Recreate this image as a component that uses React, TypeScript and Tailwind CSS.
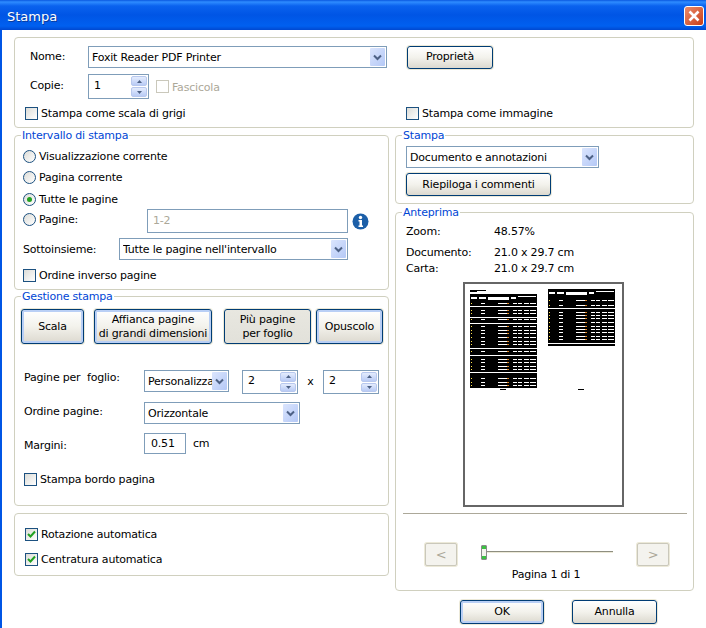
import React from "react";

const FONT = "font-['DejaVu_Sans',sans-serif] text-[11px] leading-[16px] tracking-[-0.2px] text-black";

const Group: React.FC<{ label?: string; className: string; children: React.ReactNode }> = ({ label, className, children }) => (
  <div className={`relative rounded-[4px] border border-[#d0d0bf] ${className}`}>
    {label && (
      <span className="absolute -top-[7px] left-[6px] bg-white px-[1px] leading-[14px] text-[#0046d5]">{label}</span>
    )}
    {children}
  </div>
);

const Check: React.FC<{ label: string; checked?: boolean; disabled?: boolean; className?: string }> = ({ label, checked, disabled, className }) => (
  <div className={`flex items-center ${className ?? ""}`}>
    <div
      className={`flex h-[13px] w-[13px] items-center justify-center border ${
        disabled ? "border-[#cac8bb] bg-white" : "border-[#1c5180] bg-gradient-to-br from-[#dcdcd7] to-white"
      }`}
    >
      {checked && (
        <svg width="9" height="9" viewBox="0 0 9 9">
          <path d="M1 4 L3.5 6.5 L8 1.5" fill="none" stroke="#21a121" strokeWidth="2" />
        </svg>
      )}
    </div>
    <span className={`ml-[3px] translate-y-[1px] whitespace-pre ${disabled ? "text-[#aca899]" : ""}`}>{label}</span>
  </div>
);

const Radio: React.FC<{ label: string; checked?: boolean; className?: string }> = ({ label, checked, className }) => (
  <div className={`flex items-center ${className ?? ""}`}>
    <div className="flex h-[13px] w-[13px] items-center justify-center rounded-full border border-[#1c5180] bg-gradient-to-br from-[#dcdcd7] to-white">
      {checked && <div className="h-[5px] w-[5px] rounded-full bg-[#21a121]" />}
    </div>
    <span className="ml-[3px] translate-y-[1px] whitespace-pre">{label}</span>
  </div>
);

const Select: React.FC<{ value: string; className: string }> = ({ value, className }) => (
  <div className={`flex items-center border border-[#7f9db9] bg-white pl-[3px] pr-[1px] ${className}`}>
    <span className="flex-1 translate-y-[1px] overflow-hidden whitespace-pre">{value}</span>
    <div className="flex h-[calc(100%-2px)] w-[15px] shrink-0 items-center justify-center rounded-[1px] bg-gradient-to-br from-[#dbe5fd] to-[#b4c8f6]">
      <svg width="9" height="7" viewBox="0 0 9 7">
        <path d="M1 1.5 L4.5 5 L8 1.5" fill="none" stroke="#4d6185" strokeWidth="2" />
      </svg>
    </div>
  </div>
);

const Spin: React.FC<{ value: string; className: string }> = ({ value, className }) => (
  <div className={`flex items-center border border-[#7f9db9] bg-white pl-[5px] pr-[1px] ${className}`}>
    <span className="flex-1 -translate-y-[1px]">{value}</span>
    <div className="flex h-full w-[16px] shrink-0 flex-col justify-center gap-[1px] py-[1px]">
      {[0, 1].map((i) => (
        <div key={i} className="flex flex-1 items-center justify-center rounded-[2px] border border-[#b8c8ee] bg-gradient-to-b from-[#e4ecfd] to-[#b9cbf5]">
          <svg width="5" height="3" viewBox="0 0 5 3">
            <path d={i === 0 ? "M2.5 0 L5 3 L0 3 Z" : "M0 0 L5 0 L2.5 3 Z"} fill="#4d6185" />
          </svg>
        </div>
      ))}
    </div>
  </div>
);

const Button: React.FC<{ className: string; pressed?: boolean; focused?: boolean; children: React.ReactNode }> = ({ className, pressed, focused, children }) => (
  <div
    className={`flex items-center justify-center rounded-[3px] border border-[#003c74] text-center leading-[14px] ${
      pressed ? "bg-gradient-to-b from-[#e8e7e0] to-[#e2e1da]" : "bg-gradient-to-b from-white via-[#f3f2ec] to-[#dcd9cf]"
    } ${focused ? "shadow-[inset_0_0_0_2px_#b9cff5,0_0_0_1px_#ece9d8]" : "shadow-[0_0_0_1px_#ece9d8]"} ${className}`}
  >
    {children}
  </div>
);

// tiny page thumbnail: a black table with white dashes per row
const Table: React.FC<{ x: number; y: number; h: number; rows: number[]; full: number[] }> = ({ x, y, h, rows, full }) => (
  <g transform={`translate(${x} ${y})`} shapeRendering="crispEdges">
    <rect width="67" height={h} fill="#000" />
    <rect x="1" y="3" width="6" height="2" fill="#fff" />
    <rect x="9" y="3" width="7" height="2" fill="#fff" />
    <rect x="18" y="3" width="21" height="3" fill="#fff" />
    <rect x="41" y="3" width="5" height="2" fill="#fff" />
    <rect x="48" y="2" width="18" height="1" fill="#fff" />
    {rows.map((r) => (
      <g key={r}>
        <rect x="1" y={r} width="1" height="1" fill="#ffe14a" />
        <rect x="11" y={r} width="4" height="1" fill="#fff" />
        <rect x="28" y={r} width="9" height="1" fill="#fff" />
        <rect x="37" y={r} width="2" height="1" fill="#e08a2a" />
        <rect x="43" y={r} width="4" height="1" fill="#fff" />
        <rect x="48" y={r} width="4" height="1" fill="#fff" />
        <rect x="54" y={r} width="5" height="1" fill="#fff" />
        <rect x="60" y={r} width="6" height="1" fill="#fff" />
      </g>
    ))}
    {full.map((r) => (
      <rect key={r} x="0" y={r} width="67" height="1" fill="#fff" />
    ))}
  </g>
);

const App: React.FC = () => {
  return (
    <div className={`flex h-[628px] w-[706px] flex-col overflow-hidden bg-white ${FONT}`}>
      <div className="flex h-[30px] shrink-0 items-center justify-between bg-[linear-gradient(#0a58e0_0,#2e8cff_2px,#0a62ee_6px,#0055e5_15px,#0060f0_26px,#0048d0_30px)] pl-[7px] pr-[2px]">
        <span className="translate-y-[2px] text-[13px] font-medium tracking-normal text-white [text-shadow:1px_1px_0_#0a3a9a]">Stampa</span>
        <div className="flex h-[20px] w-[20px] translate-y-[1px] items-center justify-center rounded-[3px] border border-white bg-gradient-to-br from-[#ea8a68] to-[#c93c12]">
          <svg width="12" height="12" viewBox="0 0 12 12">
            <path d="M1.5 1.5 L10.5 10.5 M10.5 1.5 L1.5 10.5" stroke="#fff" strokeWidth="2.6" />
          </svg>
        </div>
      </div>

      <div className="flex-1 border-l-2 border-[#0055e5] pl-[12px] pt-[7px]">
        <Group className="h-[91px] w-[680px] pl-[15px] pt-[8px]">
          <div className="flex h-[22px] items-center">
            <span className="w-[58px]">Nome:</span>
            <Select value="Foxit Reader PDF Printer" className="h-[22px] w-[299px]" />
            <Button className="ml-[20px] h-[23px] w-[86px]">Proprietà</Button>
          </div>
          <div className="mt-[6px] flex h-[25px] items-center">
            <span className="w-[58px] -translate-y-[1px]">Copie:</span>
            <Spin value="1" className="h-[25px] w-[61px]" />
            <Check label="Fascicola" disabled className="ml-[7px]" />
          </div>
          <div className="-ml-[5px] mt-[6px] flex">
            <Check label="Stampa come scala di grigi" className="w-[381px]" />
            <Check label="Stampa come immagine" />
          </div>
        </Group>

        <div className="mt-[7px] flex gap-[6px]">
          <div className="flex w-[375px] flex-col">
            <Group label="Intervallo di stampa" className="h-[155px] pl-[8px] pt-[12px]">
              <Radio label="Visualizzazione corrente" />
              <Radio label="Pagina corrente" className="mt-[5px]" />
              <Radio label="Tutte le pagine" checked className="mt-[6px]" />
              <div className="mt-[2px] flex h-[24px] items-center">
                <Radio label="Pagine:" className="w-[124px] -translate-y-[2px]" />
                <div className="flex h-[24px] w-[201px] items-center border border-[#7f9db9] pl-[5px] text-[#aca899]">1-2</div>
                <svg className="ml-[4px]" width="17" height="17" viewBox="0 0 17 17">
                  <circle cx="8.5" cy="8.5" r="8" fill="#1c5fa8" />
                  <circle cx="8.5" cy="4.5" r="1.7" fill="#fff" />
                  <path d="M6.5 7 H10 V12.5 H11 V14 H6.5 V12.5 H7.5 V8.5 H6.5 Z" fill="#fff" />
                </svg>
              </div>
              <div className="mt-[5px] flex h-[22px] items-center">
                <span className="w-[96px] translate-y-[1px]">Sottoinsieme:</span>
                <Select value="Tutte le pagine nell'intervallo" className="h-[22px] w-[229px]" />
              </div>
              <Check label="Ordine inverso pagine" className="mt-[7px]" />
            </Group>

            <Group label="Gestione stampa" className="mt-[6px] h-[210px] pl-[6px] pt-[12px]">
              <div className="flex h-[35px] items-stretch">
                <Button focused className="w-[63px]">Scala</Button>
                <Button focused className="ml-[10px] w-[118px]">
                  Affianca pagine
                  <br />
                  di grandi dimensioni
                </Button>
                <Button pressed className="ml-[12px] w-[87px]">
                  Più pagine
                  <br />
                  per foglio
                </Button>
                <Button focused className="ml-[5px] w-[67px]">Opuscolo</Button>
              </div>
              <div className="ml-[3px] mt-[26px] flex h-[24px] items-start">
                <span className="w-[120px] whitespace-pre">Pagine per  foglio:</span>
                <Select value="Personalizza" className="h-[22px] w-[85px]" />
                <Spin value="2" className="ml-[13px] h-[24px] w-[56px]" />
                <span className="w-[25px] translate-y-[4px] text-center">x</span>
                <Spin value="2" className="h-[24px] w-[56px]" />
              </div>
              <div className="ml-[3px] mt-[8px] flex h-[22px] items-center">
                <span className="w-[120px] -translate-y-[1px]">Ordine pagine:</span>
                <Select value="Orizzontale" className="h-[22px] w-[156px]" />
              </div>
              <div className="ml-[3px] mt-[9px] flex h-[21px] items-center">
                <span className="w-[120px] translate-y-[2px]">Margini:</span>
                <div className="flex h-[21px] w-[42px] items-center border border-[#7f9db9] pl-[6px]">0.51</div>
                <span className="ml-[7px]">cm</span>
              </div>
              <Check label="Stampa bordo pagina" className="ml-[3px] mt-[17px]" />
            </Group>

            <Group className="mt-[7px] h-[63px] pl-[10px] pt-[12px]">
              <Check label="Rotazione automatica" checked />
              <Check label="Centratura automatica" checked className="mt-[9px]" />
            </Group>
          </div>

          <div className="flex w-[299px] flex-col">
            <Group label="Stampa" className="h-[69px] pl-[10px] pt-[10px]">
              <Select value="Documento e annotazioni" className="h-[22px] w-[193px]" />
              <Button className="mt-[5px] h-[23px] w-[145px]">Riepiloga i commenti</Button>
            </Group>

            <Group label="Anteprima" className="mt-[8px] h-[379px] pt-[11px]">
              <div className="ml-[10px] flex h-[16px] items-center"><span className="w-[88px]">Zoom:</span><span>48.57%</span></div>
              <div className="ml-[10px] mt-[5px] flex h-[16px] items-center"><span className="w-[88px]">Documento:</span><span>21.0 x 29.7 cm</span></div>
              <div className="ml-[10px] flex h-[16px] items-center"><span className="w-[88px]">Carta:</span><span>21.0 x 29.7 cm</span></div>
              <svg className="ml-[67px] mt-[5px] block" width="161" height="225" viewBox="0 0 161 225">
                <rect x="1" y="1" width="159" height="223" fill="#fff" stroke="#666" strokeWidth="2" />
                <rect x="7" y="8" width="7" height="2" fill="#000" />
                <rect x="14" y="8" width="9" height="1" fill="#000" />
                <Table
                  x={7}
                  y={12}
                  h={94}
                  rows={[9, 16, 19, 25, 32, 36, 39, 43, 47, 50, 57, 65, 68, 72, 75, 84, 88, 91]}
                  full={[12, 23, 29, 54, 61, 78]}
                />
                <Table x={85} y={7} h={57} rows={[11, 16, 23, 26, 29, 33, 37, 40, 43, 47, 50]} full={[19, 54]} />
                <rect x="37" y="107" width="6" height="1" fill="#000" />
                <rect x="115" y="107" width="6" height="1" fill="#000" />
              </svg>
              <div className="mx-[7px] mt-[6px] h-[1px] w-[284px] bg-[#aca899]" />
              <div className="ml-[29px] mt-[29px] flex h-[23px] items-center">
                <div className="flex h-[23px] w-[32px] items-center justify-center rounded-[2px] border border-[#cac8bb] bg-[#f4f3ee] text-[13px] text-[#aca899] shadow-[0_0_0_1px_#ece9d8]">&lt;</div>
                <div className="relative ml-[24px] h-[2px] w-[132px] -translate-y-[3px] border-t border-[#8e8e80] bg-[#ece9d8]">
                  <div className="absolute -top-[7px] left-[0px] h-[15px] w-[6px] rounded-[1px] border border-[#8a8a8a] bg-[linear-gradient(#3cc043_0,#3cc043_3px,#f4f4ee_3px,#f4f4ee_10px,#3cc043_10px)]" />
                </div>
                <div className="ml-[24px] flex h-[23px] w-[32px] items-center justify-center rounded-[2px] border border-[#cac8bb] bg-[#f4f3ee] text-[13px] text-[#aca899] shadow-[0_0_0_1px_#ece9d8]">&gt;</div>
              </div>
              <div className="mt-[1px] pl-[3px] text-center">Pagina 1 di 1</div>
            </Group>

            <div className="mt-[9px] flex">
              <Button focused className="ml-[65px] h-[24px] w-[84px]">OK</Button>
              <Button className="ml-[28px] h-[24px] w-[85px]">Annulla</Button>
            </div>
          </div>
        </div>
      </div>
    </div>
  );
};

export default App;
